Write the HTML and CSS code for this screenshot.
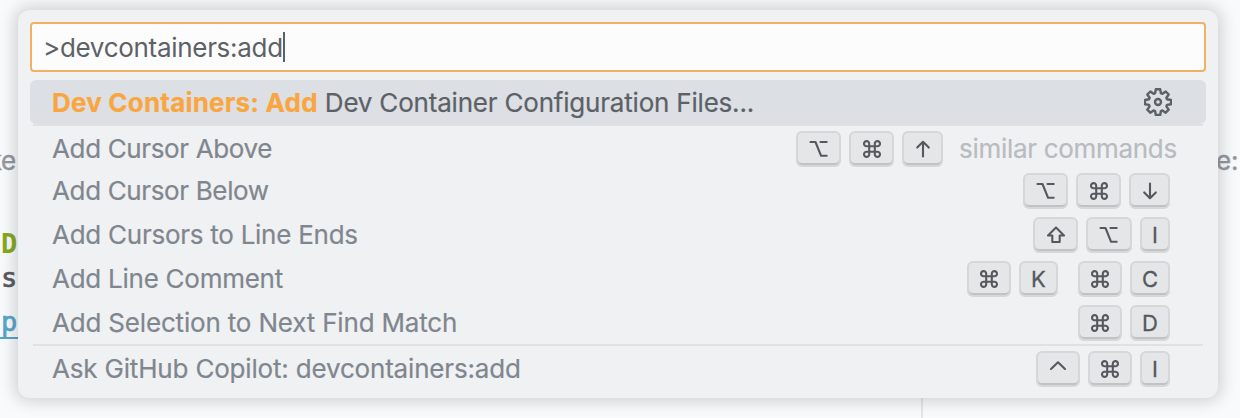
FILE: index.html
```
<!DOCTYPE html>
<html lang="en">
<head>
<meta charset="utf-8">
<title>Command Palette</title>
<link rel="stylesheet" href="styles.css">
</head>
<body>
<svg class="defs" aria-hidden="true">
  <symbol id="opt" viewBox="0 0 20 18"><path d="M1.500 2h5l5.600 13.800h5.600M11.500 2h6.200"/></symbol>
  <symbol id="cmd" viewBox="0 0 20 18"><path d="M7.200 6.300v5.400h5.600V6.300zM7.200 6.300H4.900a2.600 2.600 0 1 1 2.300-2.600zM12.800 6.300V3.700a2.600 2.600 0 1 1 2.300 2.600zM12.800 11.700h2.300a2.600 2.600 0 1 1-2.300 2.600zM7.200 11.700v2.600a2.600 2.600 0 1 1-2.300-2.600z"/></symbol>
  <symbol id="up" viewBox="0 0 20 18"><path d="M10 16.500V2M4.200 7.600 10 1.800l5.800 5.800"/></symbol>
  <symbol id="down" viewBox="0 0 20 18"><path d="M10 1.500V16M4.200 10.400 10 16.200l5.800-5.800"/></symbol>
  <symbol id="shift" viewBox="0 0 20 18"><path d="M10 1.500 18 9.500H13.700V16H6.300V9.500H2z"/></symbol>
  <symbol id="ctrl" viewBox="0 0 20 18"><path d="M3 9 10 2.300 17 9"/></symbol>
</svg>
<div class="editor">
  <span class="bg-text muted bg-ke">ke</span>
  <span class="bg-text muted bg-e">e:</span>
  <span class="bg-text heading bg-d">D</span>
  <span class="bg-text code bg-s">s</span>
  <span class="bg-text link bg-p">p</span>
  <span class="ruler"></span>
</div>
<main class="palette">
  <div class="input"><span class="query">&gt;devcontainers:add</span><span class="caret"></span></div>
  <div class="list">
    <div class="row selected">
      <span class="label"><b>Dev Containers: Add</b> <span class="rest">Dev Container Configuration Files...</span></span>
      <svg class="gear" viewBox="0 0 28 28"><path d="M11.800 1.200h4.400l.7 4 1.500.6 3.300-2.300 3 3-2.300 3.300.6 1.500 4 .7v4.200l-4 .7-.6 1.500 2.300 3.300-3 3-3.300-2.300-1.500.6-.7 4h-4.400l-.7-4-1.500-.6-3.300 2.300-3-3 2.300-3.300-.6-1.500-4-.7V12l4-.7.6-1.500-2.300-3.300 3-3 3.300 2.300 1.500-.6z"/><circle cx="14" cy="14" r="3"/></svg>
    </div>
    <div class="row first divided"><span class="label tight">Add Cursor Above</span>
      <div class="keys"><kbd class="w45"><svg><use href="#opt"/></svg></kbd><kbd class="w45"><svg><use href="#cmd"/></svg></kbd><kbd class="w41"><svg><use href="#up"/></svg></kbd></div>
      <span class="hint">similar commands</span></div>
    <div class="row"><span class="label tight">Add Cursor Below</span>
      <div class="keys"><kbd class="w45"><svg><use href="#opt"/></svg></kbd><kbd class="w45"><svg><use href="#cmd"/></svg></kbd><kbd class="w41"><svg><use href="#down"/></svg></kbd></div></div>
    <div class="row"><span class="label">Add Cursors to Line Ends</span>
      <div class="keys"><kbd class="w45"><svg><use href="#shift"/></svg></kbd><kbd class="w46"><svg><use href="#opt"/></svg></kbd><kbd class="w30">I</kbd></div></div>
    <div class="row"><span class="label">Add Line Comment</span>
      <div class="keys"><kbd class="w44"><svg><use href="#cmd"/></svg></kbd><kbd class="w39 chord">K</kbd><kbd class="w44"><svg><use href="#cmd"/></svg></kbd><kbd class="w40">C</kbd></div></div>
    <div class="row before-divider"><span class="label wide">Add Selection to Next Find Match</span>
      <div class="keys"><kbd class="w44"><svg><use href="#cmd"/></svg></kbd><kbd class="w40">D</kbd></div></div>
    <div class="row last divided"><span class="label wide">Ask GitHub Copilot: devcontainers:add</span>
      <div class="keys"><kbd class="w44"><svg><use href="#ctrl"/></svg></kbd><kbd class="w44"><svg><use href="#cmd"/></svg></kbd><kbd class="w30">I</kbd></div></div>
  </div>
</main>
</body>
</html>
```
FILE: styles.css
```
* { box-sizing: border-box; }
body { margin: 0; width: 1240px; height: 418px; overflow: hidden; background: #f8fafc; font-family: Inter, "Liberation Sans", sans-serif; font-size: 26px; letter-spacing: -.26px; color: #7f868e; padding: 10px 22px 20px 18px; }
.defs { position: absolute; width: 0; height: 0; }
.editor { position: absolute; inset: 0; overflow: hidden; }
.bg-text { position: absolute; line-height: 32px; font-size: 26px; }
.muted { color: #94979c; -webkit-text-stroke: .4px #94979c; }
.bg-ke { right: 1224px; top: 145px; }
.bg-e { left: 1216px; top: 145px; }
.heading { color: #86a91f; font: bold 27px/32px "DejaVu Sans Mono", monospace; }
.bg-d { left: 1px; top: 228px; }
.code { color: #5a5a5e; font: 27px/32px "DejaVu Sans Mono", monospace; -webkit-text-stroke: .7px #5a5a5e; }
.bg-s { left: 1px; top: 262px; }
.link { color: #55a5cd; font: 27px/32px "DejaVu Sans Mono", monospace; -webkit-text-stroke: .7px #55a5cd; }
.bg-p { left: 0; top: 306px; width: 20px; height: 33px; padding-left: 1px; border-bottom: 2px solid #55a5cd; }
.ruler { position: absolute; left: 921px; top: 396px; width: 2px; height: 22px; background: #e3e5e7; }
.palette { position: relative; width: 1200px; height: 388px; padding: 12px; border-radius: 12px; background: #f0f1f3; box-shadow: 0 0 16px 4px rgba(0,0,0,.16); }
.input { display: flex; align-items: center; width: 1176px; height: 50px; padding-left: 11px; border: 2px solid #f0b163; border-radius: 4px; background: #fcfcfc; color: #5c6166; }
.query { letter-spacing: -.3px; }
.caret { width: 2px; height: 30px; background: #5c6166; }
.list { margin-top: 8px; }
.row { display: flex; align-items: flex-start; height: 44px; padding: 4px 36px 0 22px; line-height: 36px; white-space: nowrap; }
.label { margin-right: auto; -webkit-text-stroke: .2px currentColor; }
.tight { letter-spacing: -.36px; }
.wide { letter-spacing: -.18px; }
.selected { width: 1176px; padding: 5px 34px 0 22px; border-radius: 6px; background: #dcdfe4; color: #5c6166; }
.selected b { font-weight: 700; letter-spacing: .2px; color: #f9a63f; }
.rest { letter-spacing: -.2px; }
.gear { width: 28px; height: 28px; margin-top: 3px; fill: none; stroke: #5c6166; stroke-width: 2.4; stroke-linejoin: round; }
.divided { margin: 0 3px; border-top: 2px solid #dfe1e3; padding-left: 19px; padding-right: 33px; }
.first { height: 45px; padding-top: 5px; padding-right: 25px; }
.before-divider { height: 43px; }
.last { padding-top: 5px; }
.hint { width: 219px; margin-left: 16px; letter-spacing: -.3px; color: #b8bbc0; -webkit-text-stroke: .2px #b8bbc0; }
.keys { display: flex; gap: 8px; }
kbd { display: flex; align-items: center; justify-content: center; height: 36px; padding-bottom: 1px; border: 2px solid #d5d7d9; border-radius: 6px; background: #e5e6e8; box-shadow: inset 0 -2px 0 #c0c2c4; font: 22px/1 Inter, "Liberation Sans", sans-serif; letter-spacing: 0; color: #55595e; -webkit-text-stroke: .3px #55595e; }
kbd svg { width: 20px; height: 18px; fill: none; stroke: #55595e; stroke-width: 2.1; stroke-linecap: round; stroke-linejoin: round; }
.w30 { width: 30px; }
.w39 { width: 39px; }
.w40 { width: 40px; }
.w41 { width: 41px; }
.w44 { width: 44px; }
.w45 { width: 45px; }
.w46 { width: 46px; }
.chord { margin-right: 12px; }
```
